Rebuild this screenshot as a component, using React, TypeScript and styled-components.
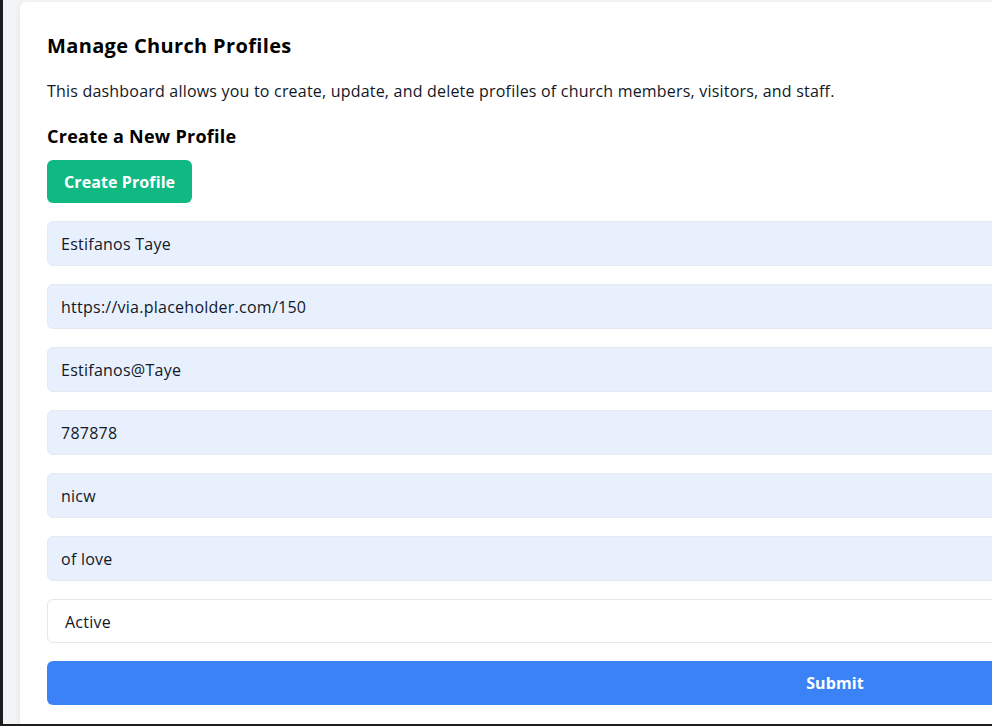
import React from "react";
import styled, { createGlobalStyle } from "styled-components";

const Global = createGlobalStyle`
  html, body { margin: 0; padding: 0; overflow: hidden; }
  body { font-family: "Open Sans", "Noto Sans", Arial, sans-serif; }
  * { box-sizing: border-box; }
`;

const Page = styled.div`
  height: 726px;
  width: 992px;
  overflow: hidden;
  background: #f3f4f6;
  border-left: 3px solid #1e1e1e;
  border-bottom: 2px solid #1e1e1e;
  padding: 2px 0 0 17px;
`;

const Card = styled.div`
  width: 1630px;
  background: #ffffff;
  border-radius: 6px;
  box-shadow: 0 2px 6px rgba(0, 0, 0, 0.08);
  padding: 30px 27px 40px 27px;
`;

const Title = styled.h2`
  margin: 0 0 19px 0;
  font-size: 20px;
  line-height: 28px;
  font-weight: 700;
  letter-spacing: 0.35px;
  color: #000;
`;

const Description = styled.p`
  margin: 0 0 19px 0;
  font-size: 16px;
  line-height: 24px;
  letter-spacing: 0.2px;
  color: #111827;
`;

const Subtitle = styled.h3`
  margin: 0 0 10px 0;
  font-size: 18px;
  line-height: 28px;
  font-weight: 700;
  letter-spacing: 0.25px;
  color: #000;
`;

const Button = styled.button<{ $tone: "green" | "blue"; $full?: boolean }>`
  display: block;
  height: ${(p) => (p.$full ? 44 : 43)}px;
  width: ${(p) => (p.$full ? "100%" : "auto")};
  padding: 0 17px;
  border: none;
  border-radius: 6px;
  background: ${(p) => (p.$tone === "green" ? "#10b981" : "#3b82f6")};
  color: #fff;
  font-family: inherit;
  font-size: 16px;
  font-weight: 700;
  letter-spacing: 0.1px;
  cursor: pointer;
`;

const Form = styled.form`
  display: flex;
  flex-direction: column;
  gap: 18px;
  margin-top: 18px;
`;

const Field = styled.input`
  height: 45px;
  width: 100%;
  padding: 1px 13px 0 13px;
  border: 1px solid #e5e9f2;
  border-radius: 6px;
  background: #e8f0fe;
  color: #111827;
  font-family: inherit;
  font-size: 16px;
  letter-spacing: 0.25px;
  outline: none;
`;

const Select = styled.select`
  height: 44px;
  width: 100%;
  padding: 2px 17px 0 17px;
  border: 1px solid #e5e7eb;
  border-radius: 6px;
  background: #fff;
  color: #111827;
  font-family: inherit;
  font-size: 16px;
  letter-spacing: 0.25px;
  appearance: none;
  outline: none;
`;

const values = [
  "Estifanos Taye",
  "https://via.placeholder.com/150",
  "Estifanos@Taye",
  "787878",
  "nicw",
  "of love",
];

export default function App() {
  return (
    <>
      <Global />
      <Page>
        <Card>
          <Title>Manage Church Profiles</Title>
          <Description>
            This dashboard allows you to create, update, and delete profiles of church members, visitors, and staff.
          </Description>
          <Subtitle>Create a New Profile</Subtitle>
          <Button type="button" $tone="green">Create Profile</Button>
          <Form onSubmit={(e) => e.preventDefault()}>
            {values.map((v) => (
              <Field key={v} defaultValue={v} />
            ))}
            <Select defaultValue="Active">
              <option>Active</option>
              <option>Inactive</option>
            </Select>
            <Button type="submit" $tone="blue" $full>Submit</Button>
          </Form>
        </Card>
      </Page>
    </>
  );
}
